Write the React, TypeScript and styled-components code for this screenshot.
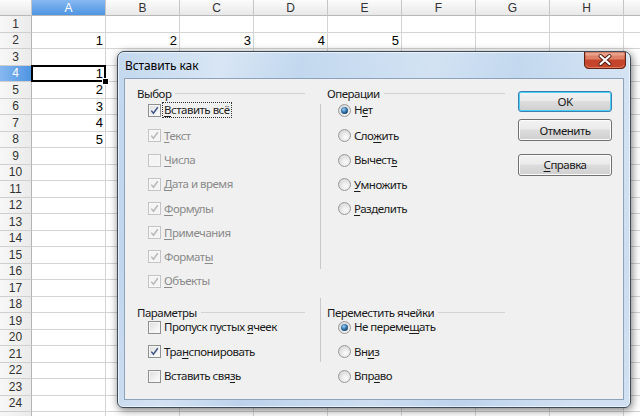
import React from 'react';
import styled, { createGlobalStyle } from 'styled-components';

const Global = createGlobalStyle`
  html, body { margin: 0; padding: 0; width: 640px; height: 416px; overflow: hidden; background: #fff; }
  #root { width: 640px; height: 416px; position: relative; overflow: hidden; }
`;

const UI_FONT = '"Noto Sans", "Open Sans", sans-serif';

/* ---------- spreadsheet ---------- */

const Sheet = styled.div`
  display: grid;
  grid-template-columns: 32px repeat(9, 74px);
  grid-template-rows: 16px repeat(25, 16.5px);
  font-family: "Liberation Sans", Arial, sans-serif;
`;

const ColHead = styled.div<{ $sel?: boolean }>`
  box-sizing: border-box;
  display: flex;
  align-items: center;
  justify-content: center;
  font-size: 12px;
  color: ${(p) => (p.$sel ? '#fff' : '#333')};
  background: ${(p) =>
    p.$sel ? 'linear-gradient(#86b8f0, #4f95e2)' : 'linear-gradient(#fcfcfc, #e8e8e8)'};
  border-right: 1px solid #c6c6c6;
  border-bottom: 1px solid #b8b8b8;
`;

const RowHead = styled.div<{ $sel?: boolean }>`
  box-sizing: border-box;
  display: flex;
  align-items: center;
  justify-content: center;
  font-size: 12px;
  color: ${(p) => (p.$sel ? '#fff' : '#333')};
  background: ${(p) =>
    p.$sel ? 'linear-gradient(to right, #86b8f0, #4f95e2)' : 'linear-gradient(to right, #f7f7f7, #ebebeb)'};
  border-right: 1px solid #b5b5b5;
  border-bottom: 1px solid #cfcfcf;
`;

const Cell = styled.div<{ $sel?: boolean }>`
  box-sizing: border-box;
  position: relative;
  display: flex;
  align-items: center;
  justify-content: flex-end;
  padding-right: 2px;
  font-size: 13px;
  color: #000;
  border-right: 1px solid #d4d4d4;
  border-bottom: 1px solid #d4d4d4;
  ${(p) =>
    p.$sel &&
    `
    &::after {
      content: '';
      position: absolute;
      left: -1px; top: -1px; right: -1px; bottom: -1px;
      border: 2px solid #000;
    }
    &::before {
      content: '';
      position: absolute;
      right: -4px; bottom: -4px;
      width: 5px; height: 5px;
      background: #000;
      border: 1px solid #fff;
      z-index: 2;
    }
  `}
`;

const COLS = ['A', 'B', 'C', 'D', 'E', 'F', 'G', 'H', ''];

function cellValue(r: number, c: number): string {
  if (r === 2 && c < 5) return String(c + 1);
  if (c === 0 && r >= 4 && r <= 8) return String(r - 3);
  return '';
}

function Spreadsheet() {
  const cells: React.ReactNode[] = [];
  cells.push(<ColHead key="corner" />);
  COLS.forEach((c, i) => cells.push(<ColHead key={'h' + i} $sel={c === 'A'}>{c}</ColHead>));
  for (let r = 1; r <= 25; r++) {
    cells.push(
      <RowHead key={'r' + r} $sel={r === 4}>
        {r <= 24 ? r : ''}
      </RowHead>
    );
    COLS.forEach((_, c) =>
      cells.push(
        <Cell key={r + '-' + c} $sel={r === 4 && c === 0}>
          {cellValue(r, c)}
        </Cell>
      )
    );
  }
  return <Sheet>{cells}</Sheet>;
}

/* ---------- dialog window ---------- */

const Window = styled.div`
  position: absolute;
  left: 117px;
  top: 51px;
  width: 514px;
  height: 357px;
  box-sizing: border-box;
  display: flex;
  flex-direction: column;
  padding: 0 6px 7px 6px;
  border: 1px solid #3c4a5a;
  border-radius: 7px 7px 6px 6px;
  background:
    linear-gradient(100deg, rgba(255,255,255,0) 0%, rgba(255,255,255,0.35) 18%, rgba(255,255,255,0) 32%, rgba(255,255,255,0.25) 55%, rgba(255,255,255,0) 70%, rgba(255,255,255,0.3) 90%),
    linear-gradient(#c4d9ef, #b7cfea 60%, #bdd3ec);
  box-shadow: 0 0 0 1px rgba(255, 255, 255, 0.6) inset, 1px 2px 8px rgba(0, 0, 0, 0.55);
  font-family: ${UI_FONT};
  color: #1a1a1a;
  z-index: 10;
`;

const TitleBar = styled.div`
  height: 26px;
  display: flex;
  align-items: flex-start;
  justify-content: space-between;
`;

const Title = styled.div`
  font-size: 12px;
  line-height: 14px;
  margin-top: 7px;
  margin-left: 1px;
  color: #000;
  letter-spacing: -0.1px;
`;

const CloseSlot = styled.div`
  flex: none;
  width: 42px;
  height: 17px;
  margin-right: -2px;
  display: flex;
`;

const Client = styled.div`
  flex: 1;
  display: flex;
  box-sizing: border-box;
  border: 1px solid #8da2bb;
  background: #f0f0f0;
  font-size: 11.5px;
  letter-spacing: -0.5px;
`;

const Main = styled.div`
  display: grid;
  grid-template-columns: 168px 15px 1px 6px 178px;
  grid-template-rows: 211px auto;
  padding: 8px 0 0 12px;
`;

const Section = styled.div<{ $col: number; $row: number; $pt?: number }>`
  grid-column: ${(p) => p.$col};
  grid-row: ${(p) => p.$row};
  padding-top: ${(p) => p.$pt ?? 0}px;
  display: flex;
  flex-direction: column;
`;

const Separator = styled.div<{ $row: number; $top: number; $h: number }>`
  grid-column: 3;
  grid-row: ${(p) => p.$row};
  margin-top: ${(p) => p.$top}px;
  height: ${(p) => p.$h}px;
  background: #c9c9c9;
`;

const SectionHeader = styled.div`
  height: 12px;
  display: flex;
  align-items: center;
  gap: 4px;
  color: #1a1a1a;
  white-space: nowrap;
  &::after {
    content: '';
    flex: 1;
    height: 1px;
    background: #d2d2d2;
    margin-top: 1px;
  }
`;

const ItemList = styled.div<{ $gap: number; $first: number; $mt: number }>`
  display: flex;
  flex-direction: column;
  gap: ${(p) => p.$gap}px;
  margin-top: ${(p) => p.$mt}px;
  & > :first-child {
    margin-bottom: ${(p) => p.$first}px;
  }
`;

const Row = styled.div<{ $disabled?: boolean }>`
  height: 20px;
  display: flex;
  align-items: center;
  gap: 1px;
  padding-left: 11px;
  color: ${(p) => (p.$disabled ? '#8a8a8a' : '#1a1a1a')};
  white-space: nowrap;
`;

const LabelText = styled.span<{ $focus?: boolean }>`
  padding: 0 1px 0 1px;
  line-height: 14px;
  border: 1px dotted ${(p) => (p.$focus ? '#333' : 'transparent')};
`;

const Mn = styled.u`
  text-decoration: underline;
  text-underline-offset: 2px;
  text-decoration-thickness: 1px;
`;

const Box = styled.span<{ $disabled?: boolean }>`
  width: 13px;
  height: 13px;
  box-sizing: border-box;
  flex: none;
  display: flex;
  align-items: center;
  justify-content: center;
  border: 1px solid ${(p) => (p.$disabled ? '#c4c4c4' : '#8e8f8f')};
  background: ${(p) =>
    p.$disabled
      ? '#f4f4f4'
      : 'linear-gradient(135deg, #dcdcdc, #f2f2f2 60%, #fdfdfd)'};
  box-shadow: inset 0 0 0 1px ${(p) => (p.$disabled ? '#f7f7f7' : '#f6f6f6')};
`;

const Radio = styled.span<{ $on?: boolean }>`
  width: 13px;
  height: 13px;
  box-sizing: border-box;
  flex: none;
  border-radius: 50%;
  border: 1px solid #9a9a9a;
  display: flex;
  align-items: center;
  justify-content: center;
  background: radial-gradient(circle at 60% 65%, #fdfdfd, #d8d8d8 75%);
  &::after {
    content: '';
    display: ${(p) => (p.$on ? 'block' : 'none')};
    width: 7px;
    height: 7px;
    border-radius: 50%;
    background: radial-gradient(circle at 40% 35%, #9fd0f6 0%, #3d7cb3 40%, #123e63 75%);
  }
`;

const Buttons = styled.div`
  display: flex;
  flex-direction: column;
  gap: 7px;
  padding-top: 12px;
  margin-left: 13px;
  width: 94px;
`;

const Button = styled.div<{ $default?: boolean; $h?: number; $mt?: number }>`
  box-sizing: border-box;
  height: ${(p) => p.$h ?? 22}px;
  margin-top: ${(p) => p.$mt ?? 0}px;
  display: flex;
  align-items: center;
  justify-content: center;
  border-radius: 3px;
  border: 1px solid ${(p) => (p.$default ? '#3c7fb1' : '#707070')};
  background: linear-gradient(#f2f2f2, #ebebeb 45%, #dddddd 50%, #cfcfcf);
  box-shadow: inset 0 0 0 1px ${(p) => (p.$default ? '#48d0f5' : '#fcfcfc')};
  color: #1a1a1a;
`;

/* ---------- pieces ---------- */

function CloseIcon() {
  return (
    <svg width="42" height="17" viewBox="0 0 42 17">
      <path d="M0.5 0 V12 Q0.5 16.5 5 16.5 H37 Q41.5 16.5 41.5 12 V0 Z" fill="#c4452b" stroke="#5e2418" />
      <path d="M1.5 0.5 H40.5 V7.5 H1.5 Z" fill="#de8168" />
      <path d="M1.5 0.5 H40.5 V3.5 H1.5 Z" fill="#e9a18b" />
      <path d="M2 13 Q4 15.5 6 15.5 H36 Q38 15.5 40 13" fill="none" stroke="#de7a5e" />
      <path d="M16.5 4 L25.5 12 M25.5 4 L16.5 12" stroke="#4a1a10" strokeWidth="4" strokeLinecap="round" />
      <path d="M16.5 4 L25.5 12 M25.5 4 L16.5 12" stroke="#ffffff" strokeWidth="2.2" strokeLinecap="round" />
    </svg>
  );
}

function Label({ text, u, focus }: { text: string; u?: number; focus?: boolean }) {
  if (u === undefined) return <LabelText $focus={focus}>{text}</LabelText>;
  return (
    <LabelText $focus={focus}>
      {text.slice(0, u)}
      <Mn>{text[u]}</Mn>
      {text.slice(u + 1)}
    </LabelText>
  );
}

function Check({ checked, disabled }: { checked?: boolean; disabled?: boolean }) {
  return (
    <Box $disabled={disabled}>
      {checked && (
        <svg width="9" height="9" viewBox="0 0 9 9">
          <path
            d="M1.3 4.6 L3.4 7.2 L7.8 1.2"
            fill="none"
            stroke={disabled ? '#b9b9b9' : '#3f5687'}
            strokeWidth="1.5"
          />
        </svg>
      )}
    </Box>
  );
}

type Opt = { text: string; u?: number; on?: boolean; disabled?: boolean; focus?: boolean };

const selection: Opt[] = [
  { text: 'Вставить всё', u: 0, on: true, focus: true },
  { text: 'Текст', u: 0, on: true, disabled: true },
  { text: 'Числа', u: 0, on: false, disabled: true },
  { text: 'Дата и время', u: 0, on: true, disabled: true },
  { text: 'Формулы', u: 0, on: true, disabled: true },
  { text: 'Примечания', u: 0, on: true, disabled: true },
  { text: 'Форматы', u: 6, on: true, disabled: true },
  { text: 'Объекты', u: 0, on: true, disabled: true },
];

const operations: Opt[] = [
  { text: 'Нет', u: 1, on: true },
  { text: 'Сложить', u: 3 },
  { text: 'Вычесть', u: 6 },
  { text: 'Умножить', u: 0 },
  { text: 'Разделить', u: 0 },
];

const options: Opt[] = [
  { text: 'Пропуск пустых ячеек', u: 15 },
  { text: 'Транспонировать', u: 3, on: true },
  { text: 'Вставить связь', u: 12 },
];

const shift: Opt[] = [
  { text: 'Не перемещать', u: 9, on: true },
  { text: 'Вниз', u: 2 },
  { text: 'Вправо', u: 3 },
];

function CheckRow({ o }: { o: Opt }) {
  return (
    <Row $disabled={o.disabled}>
      <Check checked={o.on} disabled={o.disabled} />
      <Label text={o.text} u={o.u} focus={o.focus} />
    </Row>
  );
}

function RadioRow({ o }: { o: Opt }) {
  return (
    <Row>
      <Radio $on={o.on} />
      <Label text={o.text} u={o.u} />
    </Row>
  );
}

function PasteDialog() {
  return (
    <Window>
      <TitleBar>
        <Title>Вставить как</Title>
        <CloseSlot>
          <CloseIcon />
        </CloseSlot>
      </TitleBar>
      <Client>
        <Main>
          <Section $col={1} $row={1}>
            <SectionHeader>Выбор</SectionHeader>
            <ItemList $gap={4.2} $first={1.8} $mt={1}>
              {selection.map((o) => (
                <CheckRow key={o.text} o={o} />
              ))}
            </ItemList>
          </Section>
          <Separator $row={1} $top={17} $h={165} />
          <Section $col={5} $row={1}>
            <SectionHeader>Операции</SectionHeader>
            <ItemList $gap={4.3} $first={1.7} $mt={1}>
              {operations.map((o) => (
                <RadioRow key={o.text} o={o} />
              ))}
            </ItemList>
          </Section>
          <Section $col={1} $row={2} $pt={8}>
            <SectionHeader>Параметры</SectionHeader>
            <ItemList $gap={4.5} $first={0} $mt={-1}>
              {options.map((o) => (
                <CheckRow key={o.text} o={o} />
              ))}
            </ItemList>
          </Section>
          <Separator $row={2} $top={0} $h={64} />
          <Section $col={5} $row={2} $pt={8}>
            <SectionHeader>Переместить ячейки</SectionHeader>
            <ItemList $gap={4.5} $first={0} $mt={-1}>
              {shift.map((o) => (
                <RadioRow key={o.text} o={o} />
              ))}
            </ItemList>
          </Section>
        </Main>
        <Buttons>
          <Button $default $h={21}>OK</Button>
          <Button>Отменить</Button>
          <Button $mt={6}>
            <Label text="Справка" u={0} />
          </Button>
        </Buttons>
      </Client>
    </Window>
  );
}

export default function App() {
  return (
    <>
      <Global />
      <Spreadsheet />
      <PasteDialog />
    </>
  );
}
